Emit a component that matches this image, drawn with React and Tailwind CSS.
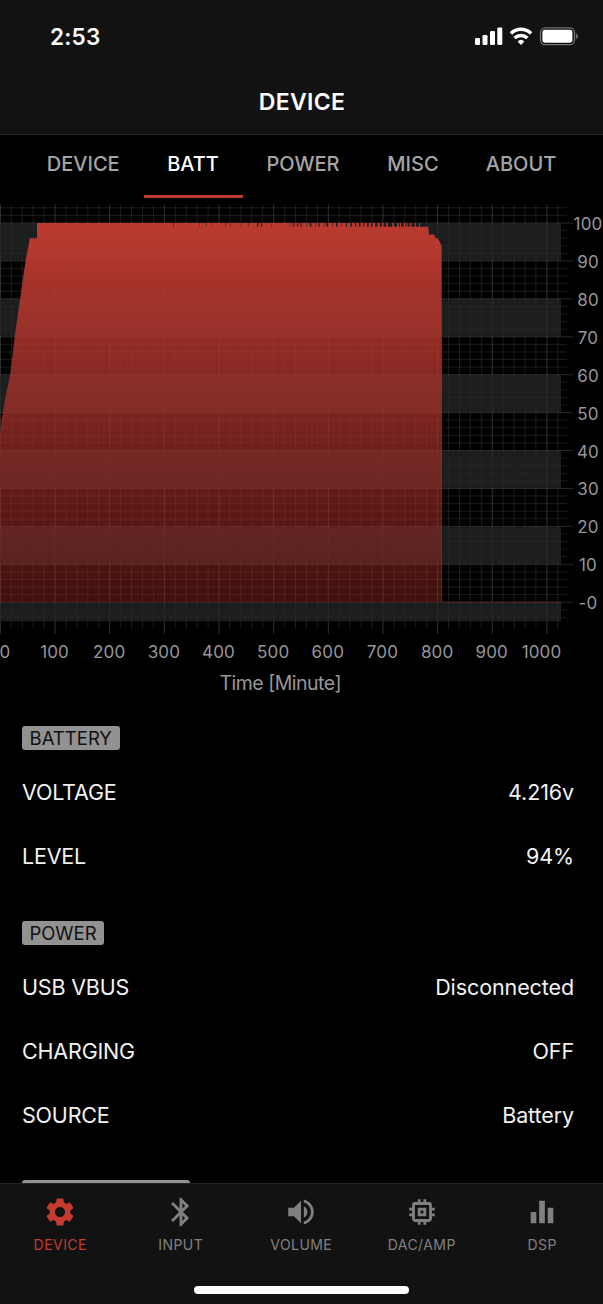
import { MdSettings, MdBluetooth, MdVolumeUp, MdEqualizer, MdMemory } from "react-icons/md";

const X0 = 0.4;
const PX = 0.5465;
const Y0 = 602.2 - 200;
const PY = 3.792;
const xs = (v) => X0 + v * PX;
const ys = (v) => Y0 - v * PY;

const xTicks = Array.from({ length: 52 }, (_, i) => i * 20);
const yTicks = Array.from({ length: 55 }, (_, i) => -4 + i * 2);
const bands = [[100, 90], [80, 70], [60, 50], [40, 30], [20, 10], [0, -5]];

// [start, end] ranges in minutes where the level dips from 100 to 99
const dips = [[316, 317], [364, 364.6], [376, 377], [386, 386.6], [412, 413], [420, 420.7], [440, 440.7], [453, 454], [470, 472], [477, 479], [496, 496.7], [531, 532], [536, 538], [543, 545], [549, 551], [560, 561], [566, 569], [576, 577], [582, 584], [592, 593], [597, 600], [607, 608], [614, 617], [624, 625], [632, 634], [640, 643], [649, 651], [656, 659], [664, 666], [671, 674], [678, 681], [686, 690], [694, 698], [701, 706], [709, 717], [720, 726], [729, 731], [733, 738], [741, 743], [745, 749], [752, 758], [760, 766], [768, 780]];

const areaPath = () => {
  const p = [[-2, 43], [0, 45], [2, 48], [9, 54], [18, 60], [27, 71], [36, 80], [46, 90], [54, 96], [67, 96], [67, 100]];
  dips.forEach(([a, b]) => p.push([a, 100], [a, 99], [b, 99], [b, 100]));
  p.pop();
  p.push([783, 99], [784, 97], [794, 97], [796, 96], [800, 96], [804, 95], [807, 94], [807, 0], [-2, 0]);
  return "M" + p.map(([x, y]) => `${xs(x).toFixed(2)} ${ys(y).toFixed(2)}`).join("L") + "Z";
};

function Chart() {
  return (
    <svg width="603" height="500" viewBox="0 0 603 500" className="block shrink-0" fontFamily="Inter, sans-serif">
      <defs>
        <linearGradient id="level" x1="0" y1="23" x2="0" y2="402" gradientUnits="userSpaceOnUse">
          <stop offset="0" stopColor="#be3b30" stopOpacity="0.98" />
          <stop offset="0.5" stopColor="#a0302a" stopOpacity="0.77" />
          <stop offset="1" stopColor="#952620" stopOpacity="0.43" />
        </linearGradient>
      </defs>
      {bands.map(([a, b]) => (
        <rect key={a} x="0" width="561" y={ys(a)} height={(a - b) * PY} fill="#1c1d1f" />
      ))}
      {xTicks.map((v) => (
        <path key={v} d={`M${xs(v)} 4.5V${v % 100 ? 428 : 434}`} stroke="#fff" strokeOpacity={v % 100 ? 0.105 : 0.19} />
      ))}
      {yTicks.map((v) => (
        <path key={v} d={`M0 ${ys(v)}H${v % 10 ? 567 : 573}`} stroke="#fff" strokeOpacity={v % 10 ? 0.1 : 0.16} />
      ))}
      {bands.map(([a, b]) => (
        <rect key={a} x="0" width="561" y={ys(a)} height={(a - b) * PY} fill="#1c1d1f" fillOpacity="0.72" />
      ))}
      <path d={areaPath()} fill="url(#level)" />
      <path d={`M${xs(807)} ${ys(94)}V${ys(0)}`} stroke="#a8352c" strokeOpacity="0.6" />
      <path d={`M${xs(807)} ${ys(0)}H561`} stroke="#5a2320" />
      <g fill="#96969a" fontSize="17" letterSpacing="0.15">
        {[100, 90, 80, 70, 60, 50, 40, 30, 20, 10, 0].map((v) => (
          <text key={v} x="588" y={ys(v) + 7} textAnchor="middle">{v === 0 ? "-0" : v}</text>
        ))}
        {[0, 100, 200, 300, 400, 500, 600, 700, 800, 900].map((v) => (
          <text key={v} x={v === 0 ? 5 : xs(v) - 0.5} y="458" textAnchor="middle">{v}</text>
        ))}
        <text x="541.5" y="458" textAnchor="middle">1000</text>
      </g>
      <text x="280.5" y="490" textAnchor="middle" fill="#96969a" fontSize="19.5" textLength="122">Time [Minute]</text>
    </svg>
  );
}

function StatusIcons() {
  return (
    <svg width="104" height="20" viewBox="475 26 104 20" fill="#fff">
      <rect x="475" y="38" width="5" height="7" rx="1.3" />
      <rect x="482.5" y="35" width="5" height="10" rx="1.3" />
      <rect x="490" y="31" width="5" height="14" rx="1.3" />
      <rect x="497.3" y="27.5" width="5" height="17.5" rx="1.3" />
      <g fill="none" stroke="#fff" strokeWidth="3.5">
        <path d="M510.9 33.4a14.6 14.6 0 0 1 20.2 0" />
        <path d="M514.6 38a9.2 9.2 0 0 1 12.8 0" />
      </g>
      <path d="M517.6 41.4a5 5 0 0 1 6.8 0L521 45z" />
      <rect x="540.5" y="27.8" width="34" height="16.8" rx="4.6" fill="none" stroke="#727272" strokeWidth="1.3" />
      <rect x="542.4" y="29.7" width="30" height="13" rx="2.4" />
      <path d="M576 33.5c2.4 .8 2.4 4.8 0 5.6z" fill="#727272" />
    </svg>
  );
}

function Row({ label, value }) {
  return (
    <div className="flex h-16 items-center justify-between pt-px pr-[29px] pl-[22px] text-[21.5px] text-[#f2f2f2]">
      <span className="tracking-[-0.18px]">{label}</span>
      <span className="tracking-[-0.1px]">{value}</span>
    </div>
  );
}

function Badge({ children, className }) {
  return (
    <div className={`ml-[22px] flex h-6 items-center justify-center rounded-[3px] bg-[#929292] pt-px text-[18.5px] text-[#111] ${className}`}>
      {children}
    </div>
  );
}

const tabs = [
  { name: "DEVICE", cell: "w-[118.5px] pr-[2px]" },
  { name: "BATT", cell: "w-[99px]" },
  { name: "POWER", cell: "w-[121px]" },
  { name: "MISC", cell: "w-[99px]" },
  { name: "ABOUT", cell: "w-[117px]" },
];

const nav = [
  { name: "DEVICE", Icon: MdSettings },
  { name: "INPUT", Icon: MdBluetooth },
  { name: "VOLUME", Icon: MdVolumeUp },
  { name: "DAC/AMP", Icon: MdMemory },
  { name: "DSP", Icon: MdEqualizer },
];

export default function App() {
  return (
    <div className="flex h-[1304px] w-[603px] flex-col overflow-hidden bg-black font-['Inter',sans-serif]">
      <header className="flex h-[135px] shrink-0 flex-col border-b border-[#232323] bg-[#121212]">
        <div className="flex h-[72px] items-center justify-between pr-[24px] pl-[50px]">
          <span className="pt-[2px] text-[22.5px] font-semibold tracking-[0.2px] text-white">2:53</span>
          <StatusIcons />
        </div>
        <h1 className="pt-[14px] pl-px text-center text-[23px] leading-[32px] font-semibold tracking-[0.35px] text-white">DEVICE</h1>
      </header>
      <nav className="flex h-[65px] shrink-0 pl-[25px]">
        {tabs.map(({ name, cell }) => (
          <div
            key={name}
            className={`flex h-[63px] items-center justify-center border-b-3 pb-[3px] text-[20px] font-medium ${cell} ${name === "BATT" ? "border-[#b93c31] text-white" : "border-transparent text-[#a5a5a5]"}`}
          >
            {name}
          </div>
        ))}
      </nav>
      <main className="flex h-[983px] shrink-0 flex-col overflow-hidden">
        <Chart />
        <Badge className="mt-[26.4px] w-[97.5px] shrink-0">BATTERY</Badge>
        <div className="mt-[9.6px] shrink-0">
          <Row label="VOLTAGE" value="4.216v" />
          <Row label="LEVEL" value="94%" />
        </div>
        <Badge className="mt-[33px] w-[82px] shrink-0">POWER</Badge>
        <div className="mt-[10px] shrink-0">
          <Row label="USB VBUS" value="Disconnected" />
          <Row label="CHARGING" value="OFF" />
          <Row label="SOURCE" value="Battery" />
        </div>
        <Badge className="mt-[33px] w-[168px] shrink-0" />
      </main>
      <footer className="flex h-[121px] shrink-0 flex-col items-center border-t border-[#242424] bg-[#121212]">
        <div className="flex h-[102px] w-full">
          {nav.map(({ name, Icon }) => (
            <div key={name} className={`flex w-[120.5px] flex-col items-center pt-[11px] ${name === "DEVICE" ? "text-[#c43c2f]" : "text-[#808080]"}`}>
              <Icon size={34} />
              <span className="mt-[7px] text-[14px] leading-[18px] tracking-[0.45px]">{name}</span>
            </div>
          ))}
        </div>
        <div className="h-[8px] w-[215px] rounded-full bg-white" />
      </footer>
    </div>
  );
}
